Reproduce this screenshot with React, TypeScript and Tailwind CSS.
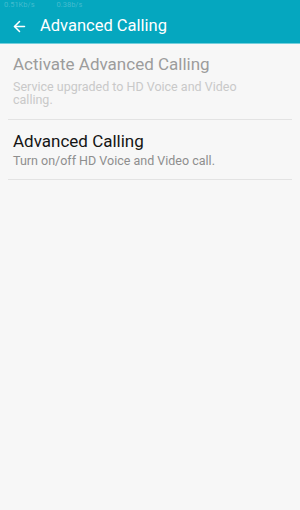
import { ArrowLeft } from "lucide-react";

export default function App() {
  return (
    <div className="w-[300px] h-[510px] bg-[#f7f7f7] font-['Roboto',sans-serif] overflow-hidden">
      <div className="relative h-[44px] bg-[#05a7bf] border-b border-[#74cfdc] flex items-center pt-[10px]">
        <div className="absolute top-[1px] left-[4px] flex gap-[22px] text-[7.5px] leading-none text-white/25">
          <span>0.51Kb/s</span>
          <span>0.38b/s</span>
        </div>
        <ArrowLeft className="w-[17px] h-[17px] text-white ml-[11px]" strokeWidth={2.2} />
        <span className="ml-[12px] text-[16.5px] text-white">Advanced Calling</span>
      </div>

      <div className="px-[8px]">
        <div className="px-[5px] pt-[9px] pb-[13px] border-b border-[#e3e3e3]">
          <div className="text-[17px] leading-[22px] text-[#9c9c9c]">Activate Advanced Calling</div>
          <div className="text-[12.5px] leading-[13px] text-[#c9c9c9] mt-[5px] pr-[20px]">
            Service upgraded to HD Voice and Video calling.
          </div>
        </div>
        <div className="px-[5px] pt-[10px] pb-[10px] border-b border-[#e3e3e3]">
          <div className="text-[17px] leading-[22px] text-[#141414]">Advanced Calling</div>
          <div className="text-[12.5px] leading-[16px] text-[#8e8e8e] mt-[1px]">
            Turn on/off HD Voice and Video call.
          </div>
        </div>
      </div>
    </div>
  );
}
